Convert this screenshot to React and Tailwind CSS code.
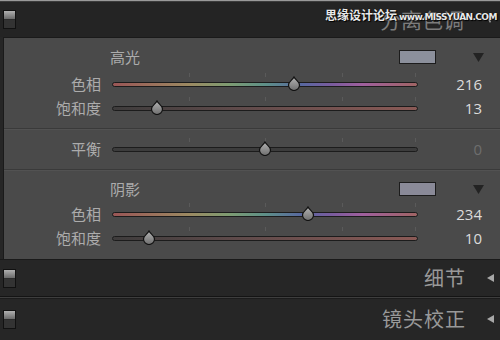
import React from "react";

const CJK = { fontFamily: '"Noto Sans CJK SC", "Noto Sans", sans-serif' };
const NUM = { fontFamily: '"Open Sans", "Noto Sans", sans-serif' };

function Switch() {
  return (
    <div className="flex h-[19px] w-[13px] flex-col border border-[#111] bg-[#2c2c2c]">
      <div className="h-[8px] bg-gradient-to-b from-[#b0b0b0] to-[#6a6a6a]" />
      <div className="mt-[1px] flex-1 bg-[#333]" />
    </div>
  );
}

function Thumb({ pos }) {
  return (
    <svg
      className="absolute top-[-6px]"
      style={{ left: pos - 7 }}
      width="14"
      height="15"
      viewBox="0 0 14 15"
    >
      <defs>
        <linearGradient id="tg" x1="0" y1="0" x2="0" y2="1">
          <stop offset="0" stopColor="#b4b4b4" />
          <stop offset="1" stopColor="#6e6e6e" />
        </linearGradient>
      </defs>
      <path
        d="M7 1 C8.5 4 12.5 5.5 12.5 9 A5.5 5.5 0 0 1 1.5 9 C1.5 5.5 5.5 4 7 1 Z"
        fill="url(#tg)"
        stroke="#111"
        strokeWidth="1.2"
      />
    </svg>
  );
}

function Ticks() {
  return (
    <div className="pointer-events-none absolute left-0 right-0 top-[-9px] h-[4px]">
      {[25, 50, 75, 99].map((p) => (
        <div
          key={p}
          className="absolute top-0 h-[4px] w-px bg-[#5a5a5a]"
          style={{ left: `${p}%` }}
        />
      ))}
    </div>
  );
}

function Track({ kind, pos }) {
  let bg = "bg-[#3c3c3c]";
  if (kind === "hue")
    bg =
      "bg-[linear-gradient(to_right,#9a5656,#9c8a62_25%,#7e9c72_38%,#5e9088_50%,#5868a0_62%,#7a5c9e_72%,#a0609e_82%,#a06464_100%)]";
  if (kind === "sat")
    bg = "bg-[linear-gradient(to_right,#3e3c3c,#5e4a4a_40%,#8a5a56_100%)]";
  return (
    <div className="relative h-[5px] w-[306px]">
      <Ticks />
      <div className={`h-[5px] w-full rounded-full border border-[#1c1c1c] ${bg}`} />
      <Thumb pos={pos} />
    </div>
  );
}

function SliderRow({ label, kind, pos, value, dim }) {
  return (
    <div className="flex h-[24px] items-center">
      <div className="w-[97px] text-right text-[15px] text-[#acacac]" style={CJK}>
        {label}
      </div>
      <div className="ml-[11px]">
        <Track kind={kind} pos={pos} />
      </div>
      <div
        className={`w-[64px] text-right text-[15px] ${dim ? "text-[#6e6e6e]" : "text-[#dcdcdc]"}`}
        style={NUM}
      >
        {value}
      </div>
    </div>
  );
}

function ToneHeader({ label, swatch }) {
  return (
    <div className="flex h-[24px] items-center">
      <div className="ml-[106px] w-[289px] text-[15px] text-[#acacac]" style={CJK}>
        {label}
      </div>
      <div className={`h-[14px] w-[37px] border border-[#1c1c1c] ${swatch}`} />
      <svg className="ml-[37px]" width="11" height="9" viewBox="0 0 11 9">
        <path d="M0 0 H11 L5.5 9 Z" fill="#232323" />
      </svg>
    </div>
  );
}

function Separator() {
  return (
    <div>
      <div className="h-px bg-[#3a3a3a]" />
      <div className="h-px bg-[#525252]" />
    </div>
  );
}

function CollapsedRow({ title, h }) {
  return (
    <div className={`flex items-center bg-[#262626] ${h}`}>
      <div className="ml-[3px]">
        <Switch />
      </div>
      <div className="flex-1" />
      <div className="text-[20px] tracking-[1px] text-[#999]" style={CJK}>
        {title}
      </div>
      <svg className="ml-[21px] mr-[6px]" width="7" height="8" viewBox="0 0 7 8">
        <path d="M7 0 V8 L0 4 Z" fill="#a8a8a8" />
      </svg>
    </div>
  );
}

export default function App() {
  return (
    <div className="flex h-[340px] w-[500px] flex-col overflow-hidden bg-[#262626]">
      <div className="h-px bg-[#9a9a9a]" />
      <div className="h-px bg-[#3c3c3c]" />
      {/* Header */}
      <div className="relative flex h-[35px] items-center bg-[#242424]">
        <div className="ml-[3px]">
          <Switch />
        </div>
        <div className="flex-1" />
        <div className="-mt-[1px] text-[21px] leading-[24px] text-[#7c7c7c]" style={CJK}>
          分离色调
        </div>
        <svg className="ml-[22px] mr-[6px]" width="8" height="7" viewBox="0 0 8 7">
          <path d="M0 0 H8 L4 7 Z" fill="#a8a8a8" />
        </svg>
        <div className="absolute left-[325px] top-[4px] flex items-baseline whitespace-nowrap">
          <span
            className="text-[12px] font-bold text-[#e8e8e8] [text-shadow:0_0_1px_#000,1px_1px_1px_#000]"
            style={CJK}
          >
            思缘设计论坛
          </span>
          <span
            className="ml-[2px] text-[9px] font-bold tracking-[-0.6px] text-[#e8e8e8] [text-shadow:0_0_1px_#000,1px_1px_1px_#000]"
            style={{ fontFamily: '"DejaVu Sans", sans-serif' }}
          >
            www.MISSYUAN.COM
          </span>
        </div>
      </div>
      {/* Body */}
      <div className="flex">
        <div className="w-[3px] bg-[#262626]" />
        <div className="flex-1 border-l border-t border-[#1a1a1a] bg-[#4a4a4a]">
          <div className="pb-[8px] pt-[7px]">
            <ToneHeader label="高光" swatch="bg-[#8c909c]" />
            <div className="mt-[3px]">
              <SliderRow label="色相" kind="hue" pos={182} value="216" />
              <SliderRow label="饱和度" kind="sat" pos={45} value="13" />
            </div>
          </div>
          <Separator />
          <div className="pb-[8px] pt-[7px]">
            <SliderRow label="平衡" kind="gray" pos={153} value="0" dim />
          </div>
          <Separator />
          <div className="pb-[9px] pt-[6px]">
            <ToneHeader label="阴影" swatch="bg-[#8a8a98]" />
            <div className="mt-[1px]">
              <SliderRow label="色相" kind="hue" pos={196} value="234" />
              <SliderRow label="饱和度" kind="sat" pos={37} value="10" />
            </div>
          </div>
        </div>
      </div>
      <div className="h-px bg-[#1a1a1a]" />
      <CollapsedRow title="细节" h="h-[36px]" />
      <div className="h-px bg-[#141414]" />
      <div className="h-px bg-[#3e3e3e]" />
      <div className="h-px bg-[#1c1c1c]" />
      <CollapsedRow title="镜头校正" h="h-[40px]" />
    </div>
  );
}
